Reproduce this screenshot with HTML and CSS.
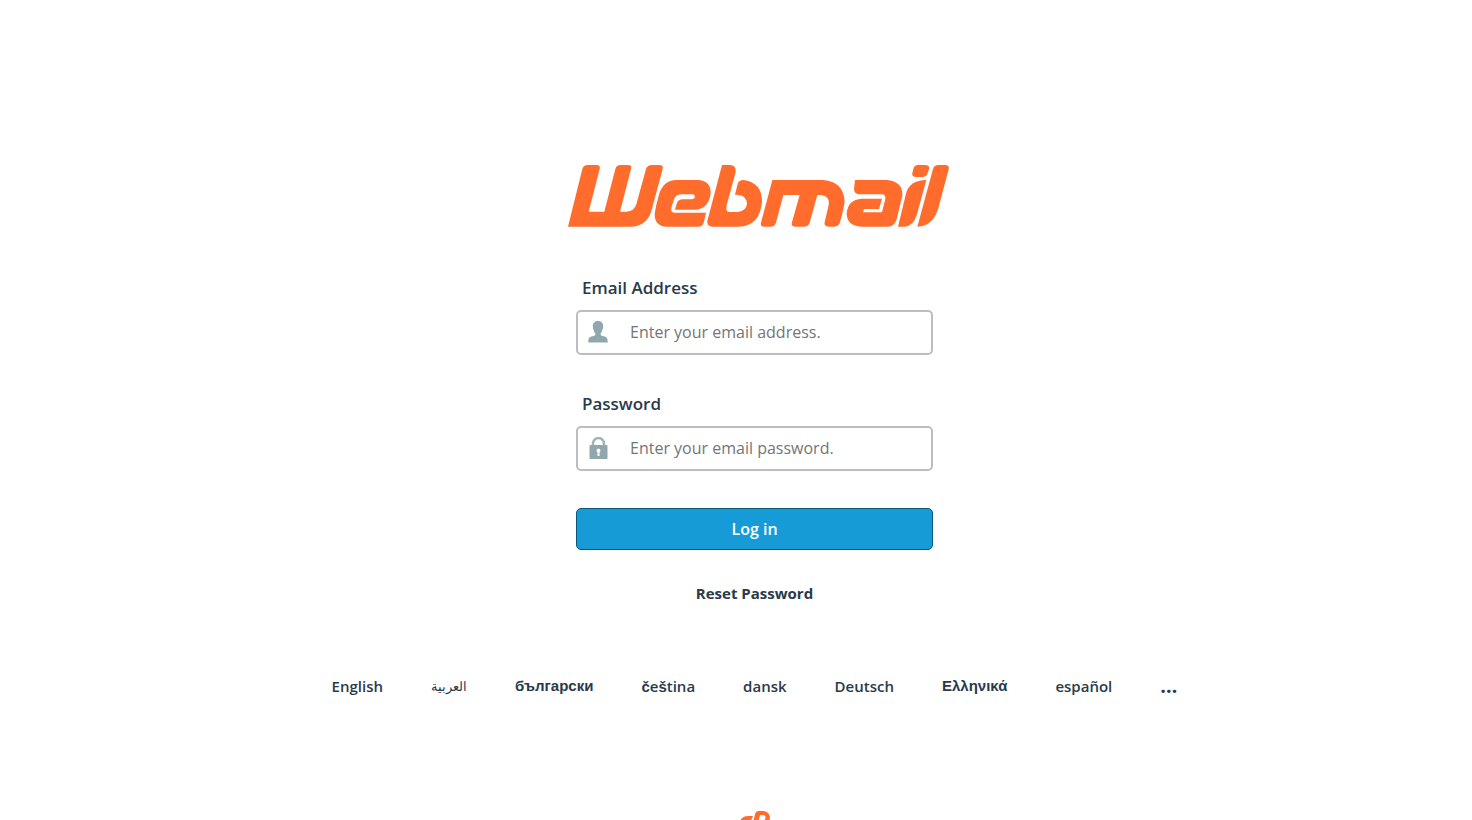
FILE: index.html
```html
<!DOCTYPE html>
<html lang="en">

<head>
    <meta charset="UTF-8">
    <meta name="viewport" content="width=device-width, initial-scale=1.0">
    <title>Webmail Login</title>
    <link rel="stylesheet" href="styles.css">
</head>

<body>
    <main class="login-wrapper">
        <svg class="logo" viewBox="24 30 1146 186" role="img" aria-label="Webmail">
            <path d="M24 215L67 42Q70 30 84 30H110Q122 30 119 42L86 170H133L166 42Q169 30 182 30H204Q217 30 213 42L180 170H200Q222 170 229 148L258 42Q262 30 276 30H298Q311 30 308 42L275 165Q261 215 212 215Z" />
            <path d="M350 75H413Q452 77 452 113Q447 163 403 164H345L350 146Q354 134 366 133H396Q404 132 405 125Q404 118 396 118H364Q346 118 341 136L334 158Q331 173 345 173H438L431 203Q427 215 414 215H320Q283 213 284 176Q288 150 296 122Q308 76 350 75Z" />
            <path d="M486 30H512Q530 32 527 52L500 150Q495 170 508 171H533Q560 168 561 145Q558 120 532 119H525L533 86Q537 75 550 75Q606 82 606 140Q600 213 535 215H456Q440 213 442 198Z" />
            <path d="M637 75H790Q850 80 854 138Q853 155 840 202Q836 215 822 215H808Q791 215 794 202L806 150Q810 122 782 120H772L749 203Q745 215 731 215H708Q692 215 696 202L719 120H670L648 203Q644 215 630 215H613Q600 215 603 203Z" />
            <path d="M885 75H980Q1030 80 1027 122L1010 192Q1004 215 982 215H905Q860 213 860 175Q864 133 905 131H966L957 162H912L909 172H966L976 132Q978 118 965 118H897Q882 117 882 102Z" />
            <path d="M1074 30H1094Q1110 30 1107 42L1103 54Q1100 66 1086 66H1070Q1054 66 1057 54L1060 42Q1063 30 1074 30Z" />
            <path d="M1014 215L1038 116Q1048 76 1099 75L1071 178Q1060 214 1034 215Z" />
            <path d="M1072 215L1119 42Q1122 30 1136 30H1155Q1169 30 1166 43L1136 156Q1121 213 1072 215Z" />
        </svg>

        <form class="login-form">
            <label class="field-label" for="user">Email Address</label>
            <div class="field">
                <svg class="field-icon" viewBox="0 0 20 22" aria-hidden="true">
                    <path d="M10 0C6.800 0 4.800 2 4.800 5C4.800 7 5.500 9 6 10C6.300 11.500 7.500 12.500 7.500 13C7.500 14.500 6 15 3.500 15.500C1 16.200 0.300 17.500 0.300 21.500H19.700C19.700 17.500 19 16.200 16.500 15.500C14 15 12.500 14.500 12.500 13C12.500 12.500 13.700 11.500 14 10C14.500 9 15.200 7 15.200 5C15.200 2 13.200 0 10 0Z" />
                </svg>
                <input type="text" id="user" name="user" placeholder="Enter your email address.">
            </div>

            <label class="field-label" for="pass">Password</label>
            <div class="field">
                <svg class="field-icon" viewBox="0 0 20 22" aria-hidden="true">
                    <path d="M5 9V6.500A5.500 5.500 0 0 1 16 6.500V9" fill="none" stroke="#a0b3b7" stroke-width="2.500" />
                    <rect x="1.500" y="8" width="18" height="14" rx="1" />
                    <path d="M10.500 11.500A2 2 0 0 0 9.500 15.200V19H11.500V15.200A2 2 0 0 0 10.500 11.500Z" fill="#fff" />
                </svg>
                <input type="password" id="pass" name="pass" placeholder="Enter your email password.">
            </div>

            <button type="submit" class="login-btn">Log in</button>
            <a class="reset-link" href="#">Reset Password</a>
        </form>

        <nav class="locales" aria-label="Languages">
            <a href="#">English</a>
            <a href="#" lang="ar" class="arabic">العربية</a>
            <a href="#" lang="bg" class="fallback">български</a>
            <a href="#" lang="cs"><span class="fallback">č</span>e<span class="fallback">š</span>tina</a>
            <a href="#" lang="da">dansk</a>
            <a href="#" lang="de">Deutsch</a>
            <a href="#" lang="el" class="fallback">Ελληνικά</a>
            <a href="#" lang="es">español</a>
            <a href="#" class="more" aria-label="More languages">…</a>
        </nav>

        <footer class="footer">
            <svg class="cp-logo" viewBox="0 0 30 22" role="img" aria-label="cPanel">
                <path d="M13 5H8C3 5 0 8 0 12C0 16 3 18 6 18H9L10 14H7C4 14 4 10 8 10H10Q11 10 13 5Z" />
                <path d="M11 22L15 3Q16 0 19 0H23C27 0 30 3 30 7C29 12 26 14 22 14H19L20 10H22C26 10 27 4 23 4H20L16 20Q15 22 11 22Z" />
            </svg>
        </footer>
    </main>
</body>

</html>
```

FILE: styles.css
```css
* {
    padding: 0;
    margin: 0;
    box-sizing: border-box;
}

html {
    scrollbar-width: none;
}

body {
    font-family: "Open Sans", "Liberation Sans", sans-serif;
    background-color: #fff;
    color: #293a4a;
}

.login-wrapper {
    display: flex;
    flex-direction: column;
    align-items: center;
    padding: 165px 0 20px 37px;
}

.logo {
    width: 382px;
    max-width: 100%;
    height: 62px;
    margin-left: 8px;
    fill: #ff6c2c;
}

.login-form {
    display: flex;
    flex-direction: column;
    width: 100%;
    max-width: 357px;
    margin-top: 49px;
}

.field-label {
    font-size: 17px;
    font-weight: 600;
    line-height: 24px;
    padding-left: 6px;
    margin-bottom: 10px;
}

.field {
    display: flex;
    align-items: center;
    height: 45px;
    border: 2px solid #bdbdbd;
    border-radius: 5px;
    padding: 0 0 2px 10px;
    margin-bottom: 37px;
}

.field:focus-within {
    border-color: #179bd7;
}

.field-icon {
    width: 20px;
    height: 22px;
    flex-shrink: 0;
    fill: #90a8ad;
}

.field input {
    flex: 1;
    min-width: 0;
    height: 100%;
    padding-left: 22px;
    border: none;
    outline: none;
    background: none;
    font-family: inherit;
    font-size: 16px;
    color: #293a4a;
}

.field input::placeholder {
    color: #757575;
}

.login-btn {
    height: 42px;
    border: 1px solid #095779;
    border-radius: 5px;
    background-color: #179bd7;
    color: #fff;
    font-family: inherit;
    font-size: 16px;
    font-weight: 600;
    cursor: pointer;
}

.reset-link {
    align-self: center;
    margin-top: 33px;
    font-size: 15px;
    font-weight: 700;
    line-height: 20px;
    color: inherit;
    text-decoration: none;
}

.locales {
    display: flex;
    flex-wrap: wrap;
    justify-content: center;
    gap: 48px;
    margin-top: 73px;
    font-size: 15px;
    font-weight: 600;
    line-height: 20px;
}

.locales a {
    color: inherit;
    text-decoration: none;
}

.locales .fallback {
    font-family: "Liberation Sans", sans-serif;
    font-weight: 700;
}

.locales .arabic {
    font-size: 13px;
    font-weight: 400;
}

.locales .more {
    font-size: 20px;
    font-weight: 700;
}

.footer {
    margin-top: 114px;
}

.cp-logo {
    display: block;
    width: 30px;
    height: 22px;
    fill: #ff6c2c;
}
```
